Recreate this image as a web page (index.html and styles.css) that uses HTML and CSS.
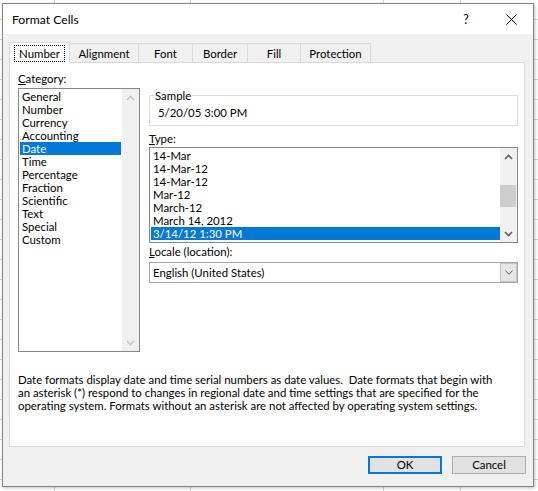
FILE: index.html
```html
<!DOCTYPE html>
<html>
<head>
<meta charset="utf-8">
<link rel="stylesheet" href="styles.css">
</head>
<body>
<div class="dialog">
  <div class="titlebar">
    <span class="title">Format Cells</span>
    <span class="help">?</span>
    <span class="close"><svg width="11" height="11" viewBox="0 0 11 11"><path d="M0.5 0.5 L10.5 10.5 M10.5 0.5 L0.5 10.5" stroke="#000" stroke-width="1" fill="none"/></svg></span>
  </div>
  <div class="content">
    <div class="tabs">
      <div class="tab sel w-number"><span class="focus">Number</span></div>
      <div class="tab w-align">Alignment</div>
      <div class="tab w-font">Font</div>
      <div class="tab w-border">Border</div>
      <div class="tab w-fill">Fill</div>
      <div class="tab w-prot">Protection</div>
    </div>
    <div class="panel">
      <div class="cols">
        <div class="left">
          <div class="label"><u>C</u>ategory:</div>
          <div class="listbox cat">
            <ul class="items">
              <li class="item">General</li>
              <li class="item">Number</li>
              <li class="item">Currency</li>
              <li class="item">Accounting</li>
              <li class="item sel">Date</li>
              <li class="item">Time</li>
              <li class="item">Percentage</li>
              <li class="item">Fraction</li>
              <li class="item">Scientific</li>
              <li class="item">Text</li>
              <li class="item">Special</li>
              <li class="item">Custom</li>
            </ul>
            <div class="vscroll">
              <div class="arrow"><svg width="9" height="6" viewBox="0 0 9 6"><path d="M1 5 L4.5 1.5 L8 5" stroke="#c4c4c4" stroke-width="1.6" fill="none"/></svg></div>
              <div class="arrow"><svg width="9" height="6" viewBox="0 0 9 6"><path d="M1 1 L4.5 4.5 L8 1" stroke="#c4c4c4" stroke-width="1.6" fill="none"/></svg></div>
            </div>
          </div>
        </div>
        <div class="right">
          <fieldset class="sample">
            <legend>Sample</legend>
            <div class="sample-val">5/20/05 3:00 PM</div>
          </fieldset>
          <div class="label type-label"><u>T</u>ype:</div>
          <div class="listbox type">
            <ul class="items">
              <li class="item">14-Mar</li>
              <li class="item">14-Mar-12</li>
              <li class="item">14-Mar-12</li>
              <li class="item">Mar-12</li>
              <li class="item">March-12</li>
              <li class="item">March 14, 2012</li>
              <li class="item sel">3/14/12 1:30 PM</li>
            </ul>
            <div class="vscroll">
              <div class="arrow"><svg width="9" height="6" viewBox="0 0 9 6"><path d="M1 5 L4.5 1.5 L8 5" stroke="#606060" stroke-width="1.6" fill="none"/></svg></div>
              <div class="track"><div class="thumb"></div></div>
              <div class="arrow"><svg width="9" height="6" viewBox="0 0 9 6"><path d="M1 1 L4.5 4.5 L8 1" stroke="#606060" stroke-width="1.6" fill="none"/></svg></div>
            </div>
          </div>
          <div class="label locale-label"><u>L</u>ocale (location):</div>
          <div class="combo">
            <span class="combo-text">English (United States)</span>
            <span class="drop"><svg width="8" height="5" viewBox="0 0 8 5"><path d="M0.5 0.8 L4 4.2 L7.5 0.8" stroke="#555" stroke-width="1" fill="none"/></svg></span>
          </div>
        </div>
      </div>
      <p class="desc">Date formats display date and time serial numbers as date values.&nbsp; Date formats that begin with<br>an asterisk (*) respond to changes in regional date and time settings that are specified for the<br>operating system. Formats without an asterisk are not affected by operating system settings.</p>
    </div>
    <div class="buttons">
      <button class="btn ok">OK</button>
      <button class="btn">Cancel</button>
    </div>
  </div>
</div>
</body>
</html>
```
FILE: styles.css
```css
html, body {
  margin: 0;
  padding: 0;
}
body {
  width: 538px;
  height: 491px;
  overflow: hidden;
  font-family: Lato, "Noto Sans", sans-serif;
  font-size: 11.4px;
  color: #000;
  background-color: #fff;
  background-image:
    linear-gradient(to right, transparent 54px, #d4d4d4 54px, #d4d4d4 55px, transparent 55px),
    linear-gradient(to right, transparent 190px, #d4d4d4 190px, #d4d4d4 191px, transparent 191px),
    linear-gradient(to right, transparent 383px, #d4d4d4 383px, #d4d4d4 384px, transparent 384px),
    linear-gradient(to right, transparent 460px, #d4d4d4 460px, #d4d4d4 461px, transparent 461px),
    repeating-linear-gradient(to bottom, transparent 0, transparent 19px, #d4d4d4 19px, #d4d4d4 20px);
}
.dialog {
  box-sizing: border-box;
  margin: 3px 0 0 2px;
  width: 532px;
  height: 484px;
  border: 1px solid #858585;
  background: #f0f0f0;
  box-shadow: 1px 1px 3px rgba(0, 0, 0, 0.25);
  display: flex;
  flex-direction: column;
}
.titlebar {
  height: 30px;
  flex: none;
  background: #fff;
  display: flex;
  align-items: center;
  padding-left: 9px;
}
.title {
  font-size: 12.2px;
}
.help {
  margin-left: auto;
  width: 12px;
  text-align: center;
  font-size: 12.5px;
}
.close {
  margin-left: 34px;
  margin-right: 16px;
  width: 11px;
  height: 11px;
  display: flex;
}
.content {
  flex: 1;
  padding: 8px 0 0 6px;
}
.tabs {
  display: flex;
  align-items: flex-end;
  height: 20px;
}
.tab {
  box-sizing: border-box;
  height: 19px;
  border: 1px solid #d9d9d9;
  border-bottom: 0;
  margin-left: -1px;
  display: flex;
  align-items: center;
  justify-content: center;
  line-height: 13px;
  white-space: nowrap;
}
.tab.sel {
  height: 21px;
  margin-left: 0;
  margin-bottom: -1px;
  background: #fff;
  position: relative;
  z-index: 1;
}
.focus {
  outline: 1px dotted #000;
  outline-offset: 0;
  padding: 1px 4px;
}
.w-number { width: 61px; }
.w-align { width: 70px; }
.w-font { width: 55px; }
.w-border { width: 56px; }
.w-fill { width: 54px; }
.w-prot { width: 71px; }
.panel {
  box-sizing: border-box;
  width: 516px;
  height: 385px;
  border: 1px solid #d9d9d9;
  background: #fff;
  padding: 9px 0 0 8px;
}
.cols {
  display: flex;
  gap: 9px;
  align-items: flex-start;
}
.left {
  width: 122px;
}
.right {
  width: 369px;
  margin-top: 17px;
}
.label {
  height: 13px;
  line-height: 13px;
  margin-bottom: 3px;
  white-space: nowrap;
}
.listbox {
  box-sizing: border-box;
  border: 1px solid #828790;
  background: #fff;
  display: flex;
}
.cat {
  height: 264px;
}
.type {
  height: 96px;
}
.items {
  flex: 1;
  list-style: none;
  margin: 0;
  padding: 1px 0 0 1px;
  min-width: 0;
}
.item {
  height: 13px;
  line-height: 13px;
  padding-left: 2px;
  white-space: nowrap;
}
.item.sel {
  background: #0078d7;
  color: #fff;
}
.cat .items {
  padding-right: 1px;
}
.vscroll {
  width: 17px;
  flex: none;
  background: #f0f0f0;
  display: flex;
  flex-direction: column;
  justify-content: space-between;
}
.arrow {
  height: 17px;
  display: flex;
  align-items: center;
  justify-content: center;
}
.track {
  flex: 1;
  display: flex;
  flex-direction: column;
  padding-top: 20px;
}
.thumb {
  height: 22px;
  margin-right: 1px;
  background: #cdcdcd;
}
.sample {
  box-sizing: border-box;
  margin: 0;
  padding: 0 0 6px 8px;
  border: 1px solid #dcdcdc;
  min-width: 0;
}
.sample legend {
  padding: 0 1px;
  margin-left: -4px;
  line-height: 13px;
}
.sample-val {
  margin-top: 4px;
  line-height: 13px;
  height: 13px;
}
.type-label {
  margin-top: 6px;
  margin-bottom: 2px;
}
.locale-label {
  margin-top: 2px;
  margin-bottom: 4px;
}
.combo {
  box-sizing: border-box;
  height: 21px;
  border: 1px solid #a5a5a5;
  background: #fff;
  display: flex;
  align-items: stretch;
}
.combo-text {
  flex: 1;
  line-height: 19px;
  padding-left: 3px;
}
.drop {
  box-sizing: border-box;
  width: 17px;
  background: #e5e5e5;
  border: 1px solid #c4c4c4;
  display: flex;
  align-items: center;
  justify-content: center;
}
.desc {
  margin: 21px 0 0 0;
  line-height: 13px;
  white-space: nowrap;
}
.buttons {
  display: flex;
  justify-content: flex-end;
  gap: 10px;
  margin-top: 9px;
  margin-right: 7px;
}
.btn {
  box-sizing: border-box;
  width: 74px;
  height: 18px;
  margin: 0;
  padding: 0;
  border: 1px solid #adadad;
  background: #e1e1e1;
  font-family: inherit;
  font-size: 11.4px;
  color: #000;
  line-height: 14px;
}
.btn.ok {
  border: 2px solid #0078d7;
}
```
